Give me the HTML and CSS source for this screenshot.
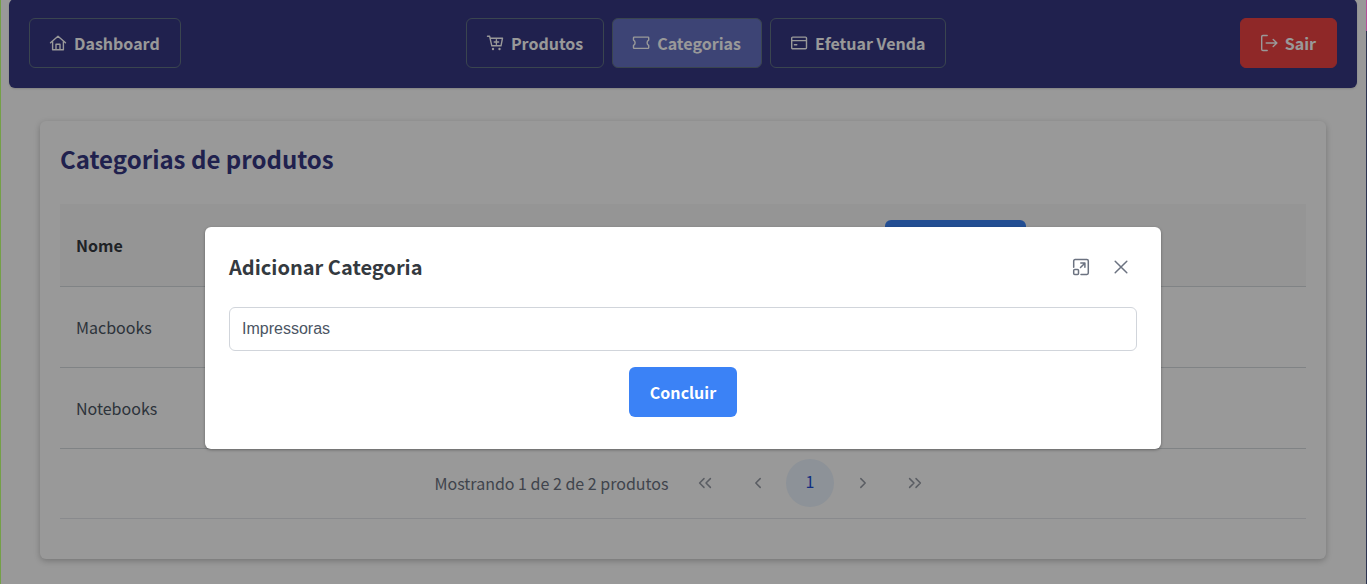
FILE: index.html
```html
<!DOCTYPE html>
<html lang="pt-BR">
<head>
<meta charset="utf-8">
<title>Categorias de produtos</title>
<link rel="stylesheet" href="styles.css">
</head>
<body>
<div class="page">
  <header class="navbar">
    <a class="nav-btn"><svg class="icon" viewBox="0 0 16 16"><path d="M.5 7.700 8 1.200l7.500 6.500M2.600 6.500v8.200h10.800V6.500M6 14.700V9.200h4v5.500"/></svg><span>Dashboard</span></a>
    <nav class="nav-group">
      <a class="nav-btn"><svg class="icon" viewBox="0 0 16 16"><path d="M.5 1.200h2.100l2.200 9.600h9.200l1.500-7.600H3.100M9.400 4.800v4.400M7.200 7h4.400"/><circle class="dot" cx="6" cy="14" r="1.200"/><circle class="dot" cx="12.500" cy="14" r="1.200"/></svg><span>Produtos</span></a>
      <a class="nav-btn active"><svg class="icon" viewBox="0 0 16 16"><path d="M1.200 2.100h13.800q.7 0 .7.700v2.300a3 3 0 0 0 0 5.300v2.300q0 .7-.7.700H1.200q-.7 0-.7-.7v-2.300a3 3 0 0 0 0-5.300V2.800q0-.7.700-.7z"/></svg><span>Categorias</span></a>
      <a class="nav-btn"><svg class="icon" viewBox="0 0 16 16"><rect x=".700" y="2.100" width="14.800" height="11.600" rx="1"/><path d="M.8 5.600h14.600M3.400 9.800h2.400"/></svg><span>Efetuar Venda</span></a>
    </nav>
    <a class="nav-btn danger"><svg class="icon" viewBox="0 0 16 16"><path d="M6.200.5H2Q.7.500.7 1.800v12.400q0 1.300 1.300 1.300h4.200M5.200 8h10.700M12.200 4.400 15.900 8l-3.700 3.600"/></svg><span>Sair</span></a>
  </header>

  <main class="card">
    <h1>Categorias de produtos</h1>
    <div class="row head"><span class="cell">Nome</span><span class="cell"><button class="add-btn" aria-label="Adicionar"></button></span></div>
    <div class="row"><span class="cell">Macbooks</span></div>
    <div class="row"><span class="cell">Notebooks</span></div>
    <div class="paginator">
      <span class="report">Mostrando 1 de 2 de 2 produtos</span>
      <span class="page-btn first"><svg viewBox="0 0 14 14"><path d="M6 2.600 1.600 7 6 11.400M12.400 2.600 8 7l4.400 4.400"/></svg></span>
      <span class="page-btn"><svg viewBox="0 0 14 14"><path d="M9.200 2.600 4.800 7l4.400 4.400"/></svg></span>
      <span class="page-btn current"><span>1</span></span>
      <span class="page-btn"><svg viewBox="0 0 14 14"><path d="M4.800 2.600 9.200 7l-4.400 4.400"/></svg></span>
      <span class="page-btn"><svg viewBox="0 0 14 14"><path d="M1.600 2.600 6 7l-4.400 4.400M8 2.600 12.400 7 8 11.400"/></svg></span>
    </div>
  </main>
</div>

<div class="mask">
  <section class="dialog" role="dialog">
    <div class="dialog-head">
      <h2>Adicionar Categoria</h2>
      <span class="dialog-icon"><svg viewBox="0 0 16 16"><path d="M.7 8.300V2Q.7.600 2.100.600h11.800q1.400 0 1.400 1.400v12q0 1.400-1.400 1.400H8M7.500 8.500l4.300-4.300M7.800 4.100h4.100v4.100"/><rect x=".7" y="10.600" width="4.800" height="4.800" rx="1"/></svg></span>
      <span class="dialog-icon"><svg viewBox="0 0 16 16"><path d="m2.200 2.200 11.600 11.600M13.800 2.200 2.200 13.800"/></svg></span>
    </div>
    <div class="dialog-body">
      <input class="field" type="text" value="Impressoras">
      <button class="submit">Concluir</button>
    </div>
  </section>
</div>
<div class="edge-left"></div>
<div class="edge-right"></div>
</body>
</html>
```

FILE: styles.css
```css
* { box-sizing: border-box; }

body {
  margin: 0;
  height: 584px;
  overflow: hidden;
  background: #fff;
  color: #4b5563;
  font: 16px/24px "Noto Sans CJK SC", "Noto Sans CJK JP", sans-serif;
}

svg { overflow: visible; fill: none; stroke: currentColor; stroke-width: 1.4; stroke-linecap: round; stroke-linejoin: round; }
.dot { fill: currentColor; stroke: none; }
button { border: 0; font: inherit; }

.page { padding: 0 10px 0 9px; }

.navbar {
  display: flex;
  align-items: center;
  justify-content: space-between;
  height: 89px;
  margin-top: -1px;
  padding: 0 20px 2px;
  border-radius: 6px;
  background: #363783;
  box-shadow: 0 1px 2px rgba(0, 0, 0, .15);
}
.nav-group { display: flex; gap: 8px; margin-right: 8px; }
.nav-btn {
  display: flex;
  align-items: center;
  gap: 8px;
  height: 50px;
  padding: 0 20px;
  border: 1px solid #617384;
  border-radius: 6px;
  color: #fff;
  font-weight: 700;
}
.icon { width: 16px; height: 16px; }
.active { background: #6672c4; }
.danger { background: #ef4444; border-color: #ef4444; }

.card {
  height: 438px;
  margin: 33px 31px 0;
  padding: 19px 20px 20px;
  border-radius: 6px;
  background: #fff;
  box-shadow: 0 2px 6px rgba(0, 0, 0, .24);
}
h1 { margin: 0 0 27px; color: #363783; font-size: 24px; line-height: 37px; }
.row {
  display: grid;
  grid-template-columns: 809px 1fr;
  align-items: center;
  height: 81px;
  padding: 0 16px;
  border-bottom: 1px solid #d6dade;
}
.head { height: 83px; background: #f8f8f9; color: #343a40; font-weight: 700; }
.add-btn { display: block; width: 141px; height: 50px; border-radius: 6px; background: #3b82f6; }

.paginator {
  display: flex;
  align-items: center;
  height: 70px;
  padding: 0 0 2px 374.500px;
  border-bottom: 1px solid #e5e7eb;
  color: #6b7280;
}
.report { width: 234px; white-space: nowrap; }
.page-btn {
  display: flex;
  align-items: center;
  justify-content: center;
  width: 48px;
  height: 48px;
  margin: 0 2.250px;
  border-radius: 50%;
}
.page-btn svg { width: 14px; height: 14px; stroke-width: 1.5; opacity: .7; }
.first { margin-left: 12.500px; }
.current { padding-bottom: 4px; background: #ebf4fd; color: #1d4ed8; }

.mask {
  position: absolute;
  inset: 0;
  display: flex;
  align-items: flex-start;
  justify-content: center;
  padding: 227px 1px 0 0;
  background: rgba(0, 0, 0, .4);
}
.dialog {
  width: 956px;
  height: 222px;
  padding: 20px 24px;
  border-radius: 6px;
  background: #fff;
  box-shadow: 0 1px 3px rgba(0, 0, 0, .35);
}
.dialog-head { display: flex; align-items: center; gap: 8px; height: 40px; }
h2 { flex: 1; margin: 0; color: #343a40; font-size: 20px; line-height: 30px; }
.dialog-icon { display: flex; align-items: center; justify-content: center; width: 32px; height: 32px; color: #6b7280; }
.dialog-icon svg { width: 16px; height: 16px; stroke-width: 1.5; }
.dialog-body { display: flex; flex-direction: column; align-items: center; gap: 16px; padding-top: 20px; }
.field {
  width: 100%;
  height: 44px;
  padding: 0 12px 1px;
  border: 1px solid #d1d5db;
  border-radius: 6px;
  color: #4b5563;
  font: 16px "Liberation Sans", Arial, sans-serif;
}
.submit { width: 108px; height: 50px; border-radius: 6px; background: #3b82f6; color: #fff; font-weight: 700; }

.edge-left { position: absolute; left: 0; top: 0; width: 1px; height: 100%; background: #74a047; }
.edge-right { position: absolute; right: 0; top: 0; width: 1px; height: 100%; background: linear-gradient(#b44e9a 31px, #2c3350 31px); }
```
